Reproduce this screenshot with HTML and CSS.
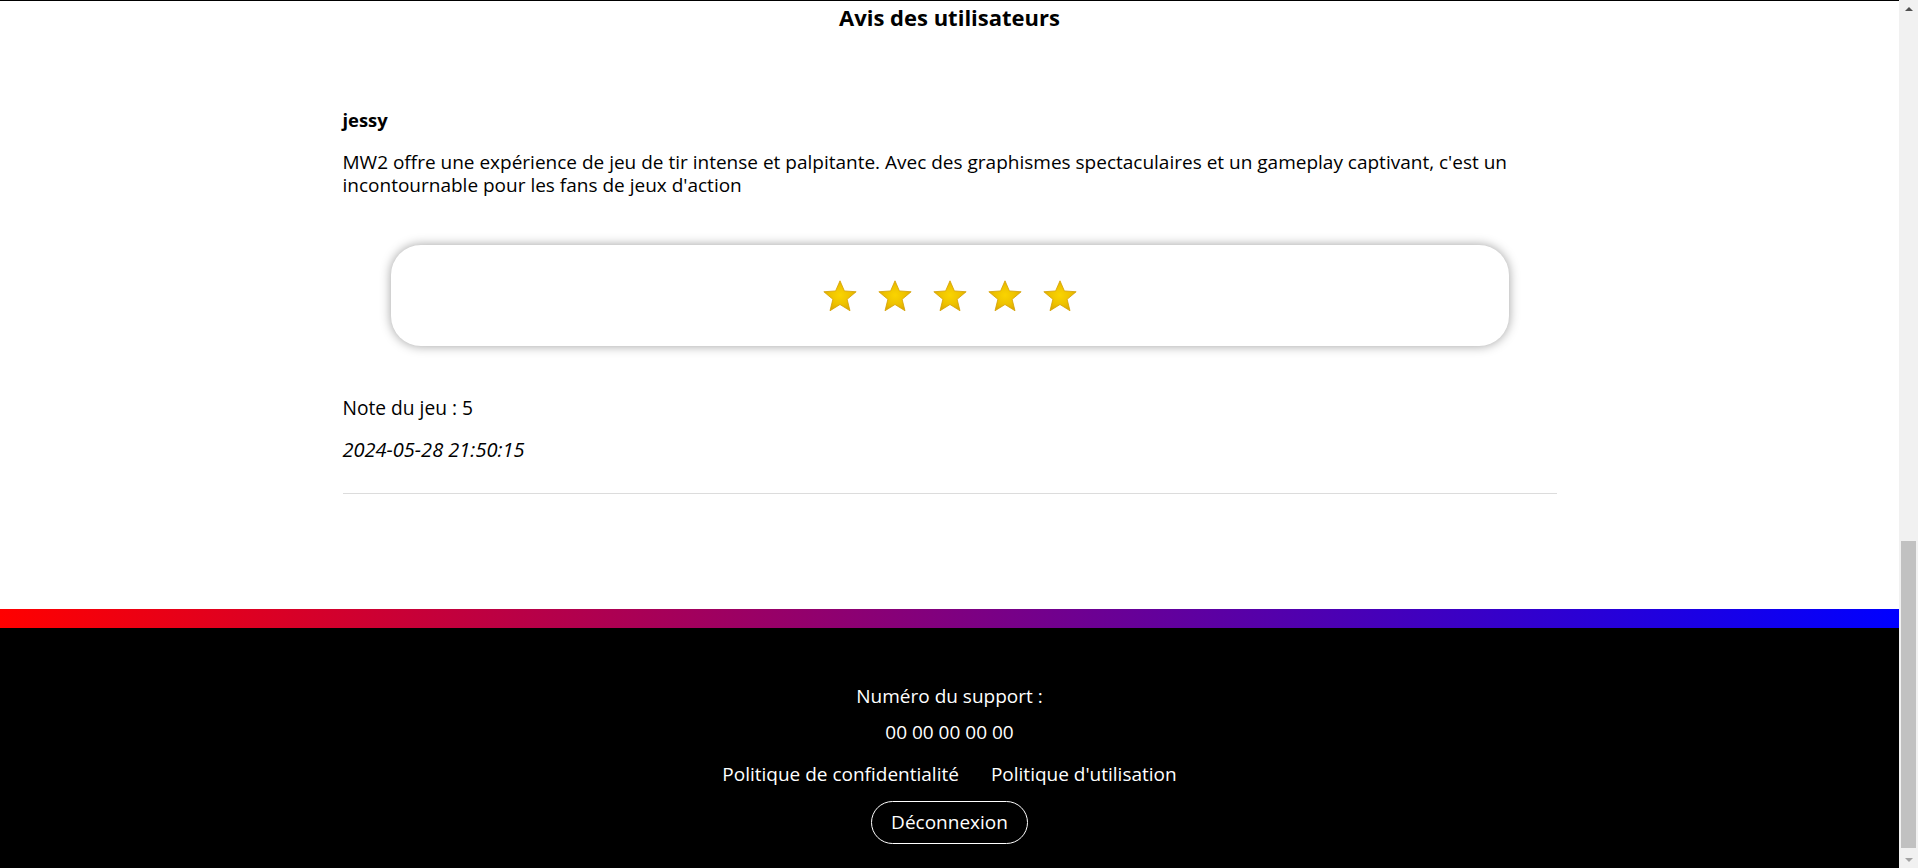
FILE: index.html
```html
<!DOCTYPE html>
<html lang="fr">
<head>
<meta charset="utf-8">
<title>Avis des utilisateurs</title>
<link rel="stylesheet" href="styles.css">
</head>
<body>
<div class="top-line"></div>
<main class="reviews">
  <h2 class="reviews-title">Avis des utilisateurs</h2>
  <article class="review">
    <h3 class="review-author">jessy</h3>
    <p class="review-text">MW2 offre une expérience de jeu de tir intense et palpitante. Avec des graphismes spectaculaires et un gameplay captivant, c'est un incontournable pour les fans de jeux d'action</p>
    <div class="rating-box">
      <svg class="defs" width="0" height="0" aria-hidden="true">
        <defs>
          <radialGradient id="starGrad" cx="50%" cy="48%" r="58%">
            <stop offset="0%" stop-color="#fad400"/>
            <stop offset="55%" stop-color="#eec200"/>
            <stop offset="100%" stop-color="#d9a500"/>
          </radialGradient>
        </defs>
      </svg>
      <div class="stars">
        <svg class="star" viewBox="0 0 34 32"><polygon points="17,0.8 21.41,10.93 33.17,11.75 24.13,19.32 26.99,30.75 17,24.5 7.01,30.75 9.87,19.32 0.83,11.75 12.59,10.93" fill="url(#starGrad)" stroke="#d4a000" stroke-width="0.8" stroke-linejoin="round"/></svg>
        <svg class="star" viewBox="0 0 34 32"><polygon points="17,0.8 21.41,10.93 33.17,11.75 24.13,19.32 26.99,30.75 17,24.5 7.01,30.75 9.87,19.32 0.83,11.75 12.59,10.93" fill="url(#starGrad)" stroke="#d4a000" stroke-width="0.8" stroke-linejoin="round"/></svg>
        <svg class="star" viewBox="0 0 34 32"><polygon points="17,0.8 21.41,10.93 33.17,11.75 24.13,19.32 26.99,30.75 17,24.5 7.01,30.75 9.87,19.32 0.83,11.75 12.59,10.93" fill="url(#starGrad)" stroke="#d4a000" stroke-width="0.8" stroke-linejoin="round"/></svg>
        <svg class="star" viewBox="0 0 34 32"><polygon points="17,0.8 21.41,10.93 33.17,11.75 24.13,19.32 26.99,30.75 17,24.5 7.01,30.75 9.87,19.32 0.83,11.75 12.59,10.93" fill="url(#starGrad)" stroke="#d4a000" stroke-width="0.8" stroke-linejoin="round"/></svg>
        <svg class="star" viewBox="0 0 34 32"><polygon points="17,0.8 21.41,10.93 33.17,11.75 24.13,19.32 26.99,30.75 17,24.5 7.01,30.75 9.87,19.32 0.83,11.75 12.59,10.93" fill="url(#starGrad)" stroke="#d4a000" stroke-width="0.8" stroke-linejoin="round"/></svg>
      </div>
    </div>
    <p class="review-note">Note du jeu : 5</p>
    <p class="review-date">2024-05-28 21:50:15</p>
  </article>
</main>
<footer class="site-footer">
  <div class="gradient-bar"></div>
  <div class="footer-inner">
    <p class="footer-label">Numéro du support :</p>
    <p class="footer-phone">00 00 00 00 00</p>
    <nav class="footer-links">
      <a href="#">Politique de confidentialité</a>
      <a href="#">Politique d'utilisation</a>
    </nav>
    <button class="logout-btn" type="button">Déconnexion</button>
  </div>
</footer>
<div class="scrollbar" aria-hidden="true">
  <div class="sb-btn"><span class="sb-arrow-up"></span></div>
  <div class="sb-space"></div>
  <div class="sb-thumb"></div>
  <div class="sb-btn sb-btn-down"><span class="sb-arrow-down"></span></div>
</div>
</body>
</html>
```

FILE: styles.css
```css
body {
  margin: 0 19px 0 0;
  font-family: "Open Sans", "Noto Sans", sans-serif;
  color: #000;
  background: #fff;
}

.top-line {
  height: 1px;
  background: #000;
}

.reviews {
  width: 1214px;
  margin: 0 auto;
}

.reviews-title {
  margin: 3px 0 0;
  font-size: 22px;
  line-height: 26px;
  font-weight: 700;
  text-align: center;
}

.review {
  margin-top: 78px;
  padding-bottom: 32px;
  border-bottom: 1px solid #dcdcdc;
}

.review-author {
  margin: 0;
  font-size: 18.4px;
  line-height: 24px;
  font-weight: 700;
}

.review-text {
  margin: 19px 0 0;
  font-size: 19px;
  line-height: 23px;
}

.rating-box {
  margin: 48px 48px 0;
  height: 101px;
  border-radius: 30px;
  background: #fff;
  box-shadow: 0 0 11px rgba(0, 0, 0, 0.38);
  display: flex;
  align-items: center;
  justify-content: center;
}

.defs {
  position: absolute;
  width: 0;
  height: 0;
}

.stars {
  display: flex;
  gap: 21px;
}

.star {
  width: 34px;
  height: 32px;
  display: block;
}

.review-note {
  margin: 50px 0 0;
  font-size: 19.2px;
  line-height: 23px;
}

.review-date {
  margin: 19px 0 0;
  font-size: 20px;
  line-height: 23px;
  font-style: italic;
}

.site-footer {
  margin-top: 115px;
  background: #000;
  color: #fff;
}

.gradient-bar {
  height: 19px;
  background: linear-gradient(to right, #ff0000, #0000ff);
}

.footer-inner {
  padding: 56px 0 24px;
  display: flex;
  flex-direction: column;
  align-items: center;
  font-size: 19px;
  line-height: 24px;
}

.footer-label,
.footer-phone {
  margin: 0;
}

.footer-phone {
  margin-top: 12px;
}

.footer-links {
  margin-top: 18px;
  display: flex;
  gap: 32px;
}

.footer-links a {
  color: #fff;
  text-decoration: none;
}

.logout-btn {
  margin-top: 15px;
  padding: 8px 19px;
  font-family: inherit;
  font-size: 19px;
  line-height: 25px;
  color: #fff;
  background: transparent;
  border: 1px solid #fff;
  border-radius: 22px;
  cursor: pointer;
}

/* window scrollbar, page scrolled to the bottom */
.scrollbar {
  position: fixed;
  top: 0;
  right: 0;
  width: 19px;
  height: 100%;
  background: #f1f1f1;
  display: flex;
  flex-direction: column;
  align-items: center;
}

.sb-btn {
  height: 17px;
  width: 100%;
  display: flex;
  align-items: center;
  justify-content: center;
}

.sb-space {
  flex: 1;
}

.sb-thumb {
  width: 15px;
  height: 307px;
  margin-bottom: 3px;
  background: #c1c1c1;
}

.sb-arrow-up {
  width: 0;
  height: 0;
  border-left: 4px solid transparent;
  border-right: 4px solid transparent;
  border-bottom: 4px solid #505050;
}

.sb-arrow-down {
  width: 0;
  height: 0;
  border-left: 4px solid transparent;
  border-right: 4px solid transparent;
  border-top: 4px solid #a3a3a3;
}
```
